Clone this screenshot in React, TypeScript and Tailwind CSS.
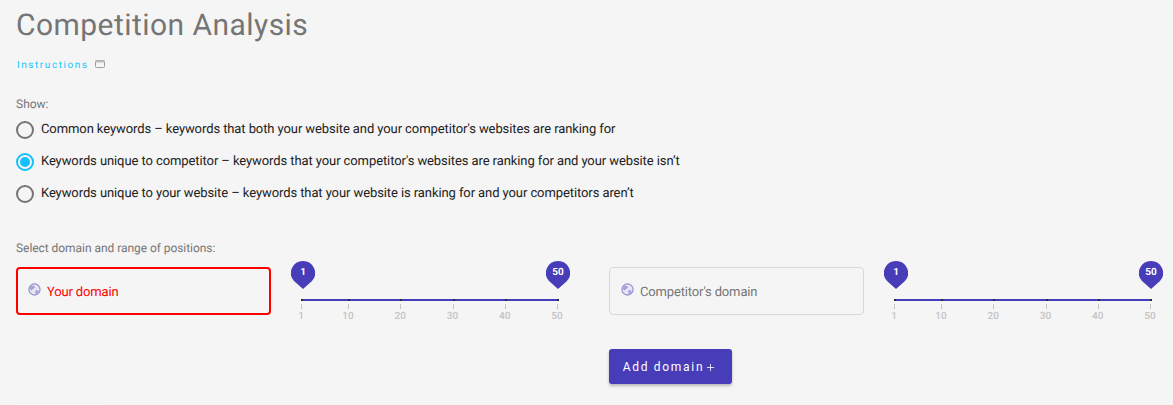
import { Plus } from "lucide-react";

const ticks = [1, 10, 20, 30, 40, 50];

const options = [
  {
    label:
      "Common keywords – keywords that both your website and your competitor's websites are ranking for",
    checked: false,
  },
  {
    label:
      "Keywords unique to competitor – keywords that your competitor's websites are ranking for and your website isn’t",
    checked: true,
  },
  {
    label:
      "Keywords unique to your website – keywords that your website is ranking for and your competitors aren’t",
    checked: false,
  },
];

const GlobeIcon = () => (
  <svg width="13" height="13" viewBox="0 0 14 14" className="shrink-0">
    <circle cx="7" cy="7" r="6" fill="#e6e6f4" stroke="#8f8ad0" strokeWidth="1.2" />
    <path d="M3 3.5 C5 2.5 7 3 7.5 4.5 C7 6 5 6 4.5 7.5 C4 8.5 2.5 7.5 2 6 Z" fill="#a5a1dc" />
    <path d="M8 8 C9.5 7.5 11.5 8 11.5 9 C11 10.5 9.5 12 8.5 12 C8 11 7.5 9.5 8 8 Z" fill="#a5a1dc" />
  </svg>
);

const Pin = ({ value, className }: { value: number; className: string }) => (
  <div className={`absolute top-0 w-6 h-[29px] ${className}`}>
    <svg width="24" height="29" viewBox="0 0 24 29" className="absolute inset-0">
      <path d="M12 0 A12 12 0 0 1 21 20 L12 28 L3 20 A12 12 0 0 1 12 0 Z" fill="#483db8" />
    </svg>
    <span className="absolute inset-x-0 top-[3px] text-center text-[10px] leading-[17px] font-bold text-white">
      {value}
    </span>
  </div>
);

const RangeSlider = () => (
  <div className="relative w-[257px] h-[62px]">
    <Pin value={1} className="left-[-10px]" />
    <Pin value={50} className="right-[-12px]" />
    <div className="absolute left-0 right-0 top-[38px] h-[2px] bg-[#483db8]" />
    {ticks.map((t) => {
      const left = ((t - 1) / 49) * 256;
      return (
        <div key={t} className="absolute top-[38px] w-0" style={{ left }}>
          <div className="absolute left-0 top-0 w-[2px] h-[2px] bg-[#2a2a35]" />
          <div className="absolute left-0 top-[5px] w-px h-[5px] bg-[#c4c4c4]" />
          <span className="absolute left-[-10px] top-[12px] w-5 text-center text-[10px] leading-3 font-medium text-[#c4c4c4]">
            {t}
          </span>
        </div>
      );
    })}
  </div>
);

const DomainInput = ({ label, error }: { label: string; error?: boolean }) => (
  <div
    className={`w-[255px] h-12 rounded flex items-center gap-[6px] ${
      error ? "border-2 border-[#ff0000] text-[#ff0000] pl-[10px]" : "border border-[#d8d8d8] text-[#757575] pl-[11px]"
    }`}
  >
    <div className="-translate-y-[2px]">
      <GlobeIcon />
    </div>
    <span className="mt-[3px] text-[13px] leading-4 tracking-[-0.15px]">{label}</span>
  </div>
);

export default function App() {
  return (
    <div className="w-[1173px] h-[405px] overflow-hidden bg-[#f5f5f5] pl-4 font-['Roboto',sans-serif] [text-rendering:geometricPrecision] antialiased">
      <h1 className="text-[30px] leading-[36px] mt-[7px] pt-[1px] tracking-[0.45px] text-[#757575]">
        Competition Analysis
      </h1>
      <div className="flex items-center gap-[6px] mt-[13px] pl-[1px] h-4">
        <span className="text-[10px] tracking-[1.55px] text-[#14c8ff]">Instructions</span>
        <svg width="10" height="8" viewBox="0 0 10 8" className="-translate-y-px">
          <rect x="0.5" y="0.5" width="9" height="7" rx="1" fill="none" stroke="#9e9e9e" />
          <rect x="0.5" y="0.5" width="9" height="2" fill="#bdbdbd" />
        </svg>
      </div>
      <p className="mt-[23px] text-[12px] leading-4 text-[#757575]">Show:</p>
      <div className="mt-[8px] flex flex-col gap-[12px]">
        {options.map((o) => (
          <label key={o.label} className="flex items-center gap-[7px] h-5 text-[13px] tracking-[-0.09px] text-[#212121]">
            {o.checked ? (
              <span className="w-[18px] h-[18px] rounded-full border-2 border-[#14c0fb] flex items-center justify-center">
                <span className="w-[10px] h-[10px] rounded-full bg-[#14c0fb]" />
              </span>
            ) : (
              <span className="w-[18px] h-[18px] rounded-full border-2 border-[#757575]" />
            )}
            {o.label}
          </label>
        ))}
      </div>
      <p className="mt-[36px] text-[12px] leading-4 tracking-[-0.05px] text-[#757575]">
        Select domain and range of positions:
      </p>
      <div className="mt-[5px] flex">
        <div className="w-[593px] flex items-start">
          <div className="mt-[6px]">
            <DomainInput label="Your domain" error />
          </div>
          <div className="ml-[30px]">
            <RangeSlider />
          </div>
        </div>
        <div className="flex items-start">
          <div className="mt-[6px]">
            <DomainInput label="Competitor's domain" />
          </div>
          <div className="ml-[30px]">
            <RangeSlider />
          </div>
        </div>
      </div>
      <button className="ml-[593px] mt-[26px] pt-px pr-[2px] w-[123px] h-[35px] rounded-[3px] bg-[#483db8] text-white text-[12px] font-normal tracking-[1.7px] flex items-center justify-center gap-[1px] shadow-[0_2px_3px_rgba(0,0,0,0.25)]">
        Add domain
        <Plus size={11} strokeWidth={1.75} />
      </button>
      <div className="mt-[20px] w-[88px] h-px bg-[#f8f8f8]" />
    </div>
  );
}
